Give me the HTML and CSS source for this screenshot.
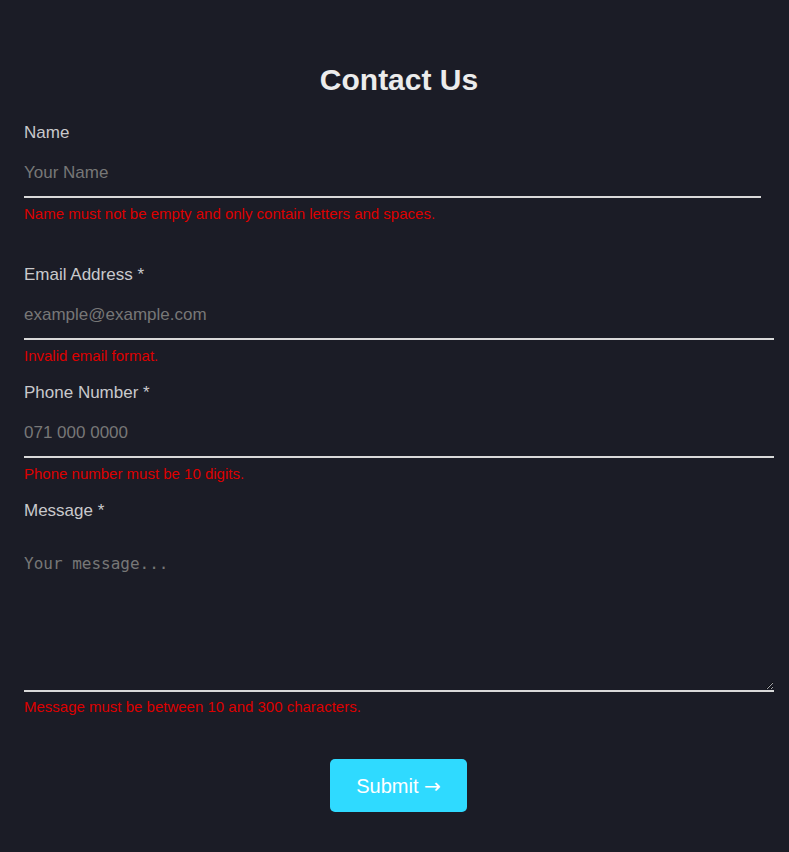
FILE: index.html
```html
<!DOCTYPE html>
<html lang="en">
<head>
<meta charset="utf-8">
<title>Contact Us</title>
<link rel="stylesheet" href="styles.css">
</head>
<body>
<main class="contact">
  <h1 class="title">Contact Us</h1>
  <form class="form" novalidate>
    <div class="field field-first">
      <label class="label" for="name">Name</label>
      <input class="input input-name" id="name" type="text" placeholder="Your Name">
      <p class="error">Name must not be empty and only contain letters and spaces.</p>
    </div>
    <div class="field">
      <label class="label" for="email">Email Address *</label>
      <input class="input" id="email" type="email" placeholder="example@example.com">
      <p class="error">Invalid email format.</p>
    </div>
    <div class="field">
      <label class="label" for="phone">Phone Number *</label>
      <input class="input" id="phone" type="tel" placeholder="071 000 0000">
      <p class="error">Phone number must be 10 digits.</p>
    </div>
    <div class="field">
      <label class="label" for="message">Message *</label>
      <textarea class="textarea" id="message" placeholder="Your message..."></textarea>
      <p class="error error-msg">Message must be between 10 and 300 characters.</p>
    </div>
    <div class="actions">
      <button class="submit" type="button">Submit <span class="arrow">→</span></button>
    </div>
  </form>
</main>
</body>
</html>
```

FILE: styles.css
```css
html, body {
  margin: 0;
  padding: 0;
  background: #1b1c26;
}
body {
  font-family: "Liberation Sans", Arial, sans-serif;
  color: #cfcfcf;
  min-height: 852px;
}
.contact {
  padding: 62px 15px 40px 24px;
}
.title {
  margin: 0;
  text-align: center;
  font-size: 30px;
  line-height: 36px;
  font-weight: bold;
  color: #ececec;
}
.form {
  display: flex;
  flex-direction: column;
  margin-top: 25px;
}
.field {
  display: flex;
  flex-direction: column;
  margin-bottom: 19px;
}
.field-first {
  margin-bottom: 43px;
}
.label {
  display: block;
  font-size: 17px;
  line-height: 20px;
  color: #c9c9cc;
}
.input, .textarea {
  box-sizing: border-box;
  width: 100%;
  margin: 7px 0 0;
  padding: 13px 0 13px 0;
  background: transparent;
  border: none;
  border-bottom: 2px solid #d9d9d9;
  outline: none;
  color: #ddd;
  font-family: "Liberation Sans", Arial, sans-serif;
  font-size: 17px;
  line-height: 20px;
  height: 48px;
}
.input-name {
  width: calc(100% - 13px);
}
.input::placeholder {
  color: #777;
}
.textarea {
  color-scheme: dark;
  margin-top: 20px;
  height: 151px;
  font-family: "DejaVu Sans Mono", "Liberation Mono", monospace;
  font-size: 16px;
  line-height: 20px;
  resize: vertical;
  display: block;
}
.textarea::placeholder {
  color: #777;
}
.error {
  margin: 7px 0 0;
  font-size: 15px;
  line-height: 17px;
  color: #dd0000;
}
.error-msg {
  margin-top: 6px;
}
.actions {
  display: flex;
  justify-content: center;
  margin-top: 25px;
  padding-right: 1px;
}
.submit {
  width: 137px;
  height: 53px;
  border: none;
  border-radius: 5px;
  background: #2fdaff;
  color: #ffffff;
  font-family: "Liberation Sans", Arial, sans-serif;
  font-size: 20px;
  cursor: pointer;
  padding: 0;
}
.arrow {
  font-family: "DejaVu Sans", sans-serif;
  font-size: 20px;
}
```
